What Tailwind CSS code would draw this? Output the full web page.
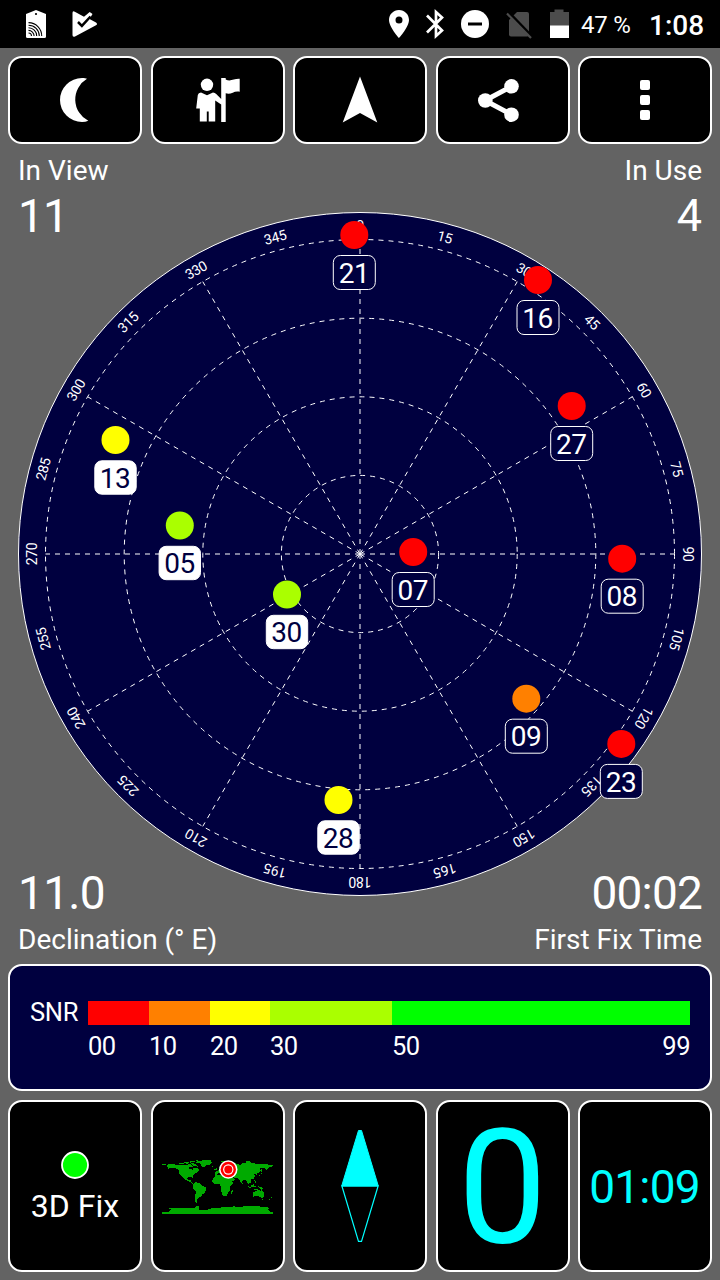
<!DOCTYPE html>
<html lang="en">
<head>
<meta charset="utf-8">
<title>GPS Satellites</title>
<script src="https://cdn.jsdelivr.net/npm/@tailwindcss/browser@4"></script>
</head>
<body class="w-[720px] h-[1280px] overflow-hidden bg-[#636363] text-white font-[Roboto,sans-serif] flex flex-col">

<!-- Status bar -->
<header class="h-12 shrink-0 bg-black flex items-center justify-between pl-[26px] pr-4">
  <div class="flex items-center gap-[26px]">
    <svg class="w-5 h-7" viewBox="26 10 20 28"><path d="M26 14L36 10l10 4V36.500Q46 38 44.500 38H27.500Q26 38 26 36.500Z" fill="#fff"/><circle cx="36" cy="14" r="1.100"/><path d="M28.500 33a3 3 0 0 1 3 3M28.500 30.400a5.600 5.600 0 0 1 5.600 5.600M28.500 27.800a8.200 8.200 0 0 1 8.200 8.200M28.500 25.200a10.800 10.800 0 0 1 10.800 10.800M28.500 22.600a13.200 13.200 0 0 1 13.200 13.400" fill="none" stroke="#000" stroke-width="1.100"/></svg>
    <svg class="w-[26px] h-[28px]" viewBox="72 10 26 28"><path d="M72.500 13Q72.500 10.500 74.800 11.800L84 16.800L89.700 12L92.500 14L89.500 19L96 22.500Q98 24 96 25.300L75 36.500Q72.500 37.500 72.500 35Z" fill="#fff"/><path d="M78 22L81.900 25.900L90.500 16.500" fill="none" stroke="#000" stroke-width="2.500"/></svg>
  </div>
  <div class="flex items-center">
    <svg class="w-[182px] h-8" viewBox="388 8 182 32">
      <path fill="#fff" fill-rule="evenodd" d="M399 10c-5.600 0-10 4.400-10 9.900C389 27 399 38 399 38s10-11 10-18.100c0-5.500-4.400-9.900-10-9.900zm0 6.400a3.500 3.500 0 1 1 0 7 3.500 3.500 0 0 1 0-7z"/>
      <path d="M427 15.500L442 30.500L436 36V12L442 17.500L427 32.500" fill="none" stroke="#fff" stroke-width="2.700"/>
      <circle cx="475" cy="24" r="14" fill="#fff"/><path d="M468 24h14" stroke="#000" stroke-width="3"/>
      <path d="M517 12H527Q529 12 529 14V34.500Q529 36.500 527 36.500H511Q509 36.500 509 34.500V20Z" fill="#4c4c4c"/><path d="M508.500 12L533 37.500" stroke="#000" stroke-width="2.600"/><path d="M507 13.500L531 38" stroke="#4c4c4c" stroke-width="2.200"/>
      <path d="M550 12h4.500V9.500h9V12h5.500V26H550Z" fill="#4c4c4c"/><path d="M550 25.500h19V38h-19z" fill="#fff"/>
    </svg>
    <span class="ml-[11px] w-[50px] text-[24px] leading-none whitespace-nowrap pt-[2px] tracking-[-0.2px]">47 %</span>
    <span class="ml-[18px] w-[55px] text-[28px] leading-none font-medium whitespace-nowrap pt-[3px]">1:08</span>
  </div>
</header>

<!-- Toolbar -->
<nav class="mt-2 mx-2 h-[88px] shrink-0 grid grid-cols-5 gap-[8.5px]">
  <button class="bg-black border-2 border-white rounded-[14px] flex items-center justify-center">
    <svg class="w-[130px] h-[84px]" viewBox="10 58 130 84"><path d="M87 78.800C84 78 82.500 78 82 78A22 22 0 0 0 82 122Q85.500 122 88.300 120.800A24 24 0 0 1 87 78.800Z" fill="#fff"/></svg>
  </button>
  <button class="bg-black border-2 border-white rounded-[14px] flex items-center justify-center">
    <svg class="w-[130px] h-[84px]" viewBox="153 58 130 84" fill="#fff"><circle cx="207" cy="84.800" r="6.200"/><path d="M221.200 78h4.500v1.500c5 2.500 8-1 14-.7v13c-6-1.500-8.500 3.500-14 1.500V122H221.200v-17.500l-6-4v21H208.700v-10h-1.900v10h-7V108.500h-3.600L197.800 95Q198.300 92.500 201 92.500l6 2.800 6-2.800q2 0 3.200 1.500l5 5z"/></svg>
  </button>
  <button class="bg-black border-2 border-white rounded-[14px] flex items-center justify-center">
    <svg class="w-[130px] h-[84px]" viewBox="295 58 130 84"><path d="M360 76.500L377.300 122.500L360 113L342.700 122.500Z" fill="#fff"/></svg>
  </button>
  <button class="bg-black border-2 border-white rounded-[14px] flex items-center justify-center">
    <svg class="w-[130px] h-[84px]" viewBox="438 58 130 84" fill="#fff"><path d="M511.500 86.500L485 100.500L511.500 114.500" fill="none" stroke="#fff" stroke-width="5"/><circle cx="485.300" cy="100.500" r="7.300"/><circle cx="511.500" cy="86.300" r="7.300"/><circle cx="511.500" cy="114.700" r="7.300"/></svg>
  </button>
  <button class="bg-black border-2 border-white rounded-[14px] flex flex-col gap-[5px] items-center justify-center">
    <span class="size-[10px] rounded-[2px] bg-white"></span><span class="size-[10px] rounded-[2px] bg-white"></span><span class="size-[10px] rounded-[2px] bg-white"></span>
  </button>
</nav>

<!-- Sky view -->
<main class="relative h-[820px] shrink-0 flex flex-col justify-between px-[18px]">
  <svg class="absolute left-0 top-0 w-[720px] h-[820px]" viewBox="0 144 720 820" font-family="Roboto, sans-serif">
    <circle cx="360" cy="554" r="341.500" fill="#00003f" stroke="#fff"/>
    <g transform="translate(360 554)" fill="none" stroke="#fff" stroke-dasharray="5 5">
      <circle r="78.600"/><circle r="157.200"/><circle r="235.800"/><circle r="314.500"/>
      <path d="M0 0V-314.500M0 0V314.500M0 0H314.500M0 0H-314.500M0 0L157.250 -272.360M0 0L272.360 -157.250M0 0L272.360 157.250M0 0L157.250 272.360M0 0L-157.250 272.360M0 0L-272.360 157.250M0 0L-272.360 -157.250M0 0L-157.250 -272.360"/>
    </g>
    <g transform="translate(360 554)" fill="#fff" font-size="14" text-anchor="middle" letter-spacing="-.3">
      <text y="-323">0</text>
      <text y="-323" transform="rotate(15)">15</text>
      <text y="-323" transform="rotate(30)">30</text>
      <text y="-323" transform="rotate(45)">45</text>
      <text y="-323" transform="rotate(60)">60</text>
      <text y="-323" transform="rotate(75)">75</text>
      <text y="-323" transform="rotate(90)">90</text>
      <text y="-323" transform="rotate(105)">105</text>
      <text y="-323" transform="rotate(120)">120</text>
      <text y="-323" transform="rotate(135)">135</text>
      <text y="-323" transform="rotate(150)">150</text>
      <text y="-323" transform="rotate(165)">165</text>
      <text y="-323" transform="rotate(180)">180</text>
      <text y="-323" transform="rotate(195)">195</text>
      <text y="-323" transform="rotate(210)">210</text>
      <text y="-323" transform="rotate(225)">225</text>
      <text y="-323" transform="rotate(240)">240</text>
      <text y="-323" transform="rotate(255)">255</text>
      <text y="-323" transform="rotate(270)">270</text>
      <text y="-323" transform="rotate(285)">285</text>
      <text y="-323" transform="rotate(300)">300</text>
      <text y="-323" transform="rotate(315)">315</text>
      <text y="-323" transform="rotate(330)">330</text>
      <text y="-323" transform="rotate(345)">345</text>
    </g>
    <!-- Satellites in view -->
    <g font-size="28" text-anchor="middle" fill="#00003f" stroke="#fff" letter-spacing="-.5">
      <g transform="translate(354.300 235)"><circle r="14" fill="#f00" stroke="none"/><rect x="-21" y="20.500" width="42" height="34" rx="7"/><text x="-.4" y="47.700" fill="#fff" stroke="none">21</text></g>
      <g transform="translate(538 280)"><circle r="14" fill="#f00" stroke="none"/><rect x="-21" y="20.500" width="42" height="34" rx="7"/><text x="-.4" y="47.700" fill="#fff" stroke="none">16</text></g>
      <g transform="translate(571.700 406)"><circle r="14" fill="#f00" stroke="none"/><rect x="-21" y="20.500" width="42" height="34" rx="7"/><text x="-.4" y="48" fill="#fff" stroke="none">27</text></g>
      <g transform="translate(413.200 552)"><circle r="14" fill="#f00" stroke="none"/><rect x="-21" y="20.500" width="42" height="34" rx="7"/><text x="-.4" y="47.700" fill="#fff" stroke="none">07</text></g>
      <g transform="translate(622.200 558.700)"><circle r="14" fill="#f00" stroke="none"/><rect x="-21" y="20.500" width="42" height="34" rx="7"/><text x="-.4" y="47.300" fill="#fff" stroke="none">08</text></g>
      <g transform="translate(526.300 698.700)"><circle r="14" fill="#ff8000" stroke="none"/><rect x="-21" y="20.500" width="42" height="34" rx="7"/><text x="-.4" y="47.300" fill="#fff" stroke="none">09</text></g>
      <g transform="translate(621.300 743.900)"><circle r="14" fill="#f00" stroke="none"/><rect x="-21" y="20.500" width="42" height="34" rx="7"/><text x="-.4" y="48" fill="#fff" stroke="none">23</text></g>
      <g transform="translate(115.500 440)"><circle r="14" fill="#ff0" stroke="none"/><rect x="-20.700" y="20.800" width="41.400" height="33.400" rx="7" fill="#fff"/><text x="-.4" y="47.700" stroke="none">13</text></g>
      <g transform="translate(179.800 525.500)"><circle r="14" fill="#af0" stroke="none"/><rect x="-20.700" y="20.800" width="41.400" height="33.400" rx="7" fill="#fff"/><text x="-.4" y="47.500" stroke="none">05</text></g>
      <g transform="translate(287 594.500)"><circle r="14" fill="#af0" stroke="none"/><rect x="-20.700" y="20.800" width="41.400" height="33.400" rx="7" fill="#fff"/><text x="-.4" y="47.500" stroke="none">30</text></g>
      <g transform="translate(338.500 800)"><circle r="14" fill="#ff0" stroke="none"/><rect x="-20.700" y="20.800" width="41.400" height="33.400" rx="7" fill="#fff"/><text x="-.4" y="48" stroke="none">28</text></g>
    </g>
  </svg>
  <div class="flex justify-between pt-[10px]">
    <div><div class="text-[28px] leading-[33px]">In View</div><div class="text-[46px] leading-[54px] mt-[2px] tracking-[-0.8px]">11</div></div>
    <div class="text-right"><div class="text-[28px] leading-[33px]">In Use</div><div class="text-[45px] leading-[54px] mt-[2px]">4</div></div>
  </div>
  <div class="flex justify-between pb-[8px]">
    <div><div class="text-[46px] leading-[54px] tracking-[-0.7px]">11.0</div><div class="text-[28px] leading-[33px] mt-[3px]">Declination (° E)</div></div>
    <div class="text-right"><div class="text-[46px] leading-[54px] tracking-[-0.8px]">00:02</div><div class="text-[28px] leading-[33px] mt-[3px]">First Fix Time</div></div>
  </div>
</main>

<!-- Signal strength legend -->
<section class="mx-2 h-[127px] shrink-0 bg-[#00003f] border-2 border-white rounded-[14px] pl-5 pr-5 pt-[31px]">
  <div class="flex items-center h-[32px]">
    <span class="w-[58px] text-[25.5px] leading-[32px] pb-[2px] tracking-[-0.3px]">SNR</span>
    <div class="flex h-6 w-[602px]">
      <div class="w-[61px] bg-[#ff0000]"></div><div class="w-[61px] bg-[#ff8000]"></div><div class="w-[60px] bg-[#ffff00]"></div><div class="w-[122px] bg-[#aaff00]"></div><div class="flex-1 bg-[#00ff00]"></div>
    </div>
  </div>
  <div class="flex ml-[58px] mt-px text-[25.5px] leading-[32px] tracking-[-0.5px]">
    <span class="w-[61px]">00</span><span class="w-[61px]">10</span><span class="w-[60px]">20</span><span class="w-[122px]">30</span><span class="flex-1">50</span><span>99</span>
  </div>
</section>

<!-- Bottom tiles -->
<footer class="mx-2 mt-[8.500px] h-[172.500px] shrink-0 grid grid-cols-5 gap-[8.5px]">
  <div class="bg-black border-2 border-white rounded-[14px] flex flex-col items-center pt-[49px]">
    <svg class="size-7" viewBox="0 0 28 28"><circle cx="14" cy="14" r="13" fill="#0f0" stroke="#fff" stroke-width="1.800"/></svg>
    <div class="text-[32px] leading-[38px] mt-[8px]">3D Fix</div>
  </div>
  <div class="bg-black border-2 border-white rounded-[14px] flex justify-center pt-[58px]">
    <svg class="w-[112px] h-[56px] overflow-visible" viewBox="162 1159.500 112 56">
      <g transform="translate(217.500 1185.500) scale(.308)" fill="#0a0" shape-rendering="crispEdges">
        <path d="M-180 -71h12v4h-12zM-165 -68L-156 -71L-141 -70L-125 -69L-110 -68L-96 -68L-93 -72L-84 -69L-80 -63L-93 -60L-93 -57L-80 -52L-78 -60L-68 -60L-60 -54L-56 -51L-66 -49L-60 -46L-70 -43L-76 -36L-81 -31L-80 -25L-84 -30L-94 -29L-98 -25L-97 -20L-91 -19L-87 -21L-88 -16L-83 -14L-82 -9L-78 -8L-83 -8L-91 -14L-105 -20L-111 -26L-117 -33L-124 -40L-124 -48L-132 -56L-143 -60L-152 -58L-162 -55L-157 -59L-164 -62Z"/>
        <path d="M-124 -76L-110 -73L-114 -70L-124 -72ZM-103 -77L-95 -73L-101 -71ZM-90 -77L-78 -74L-66 -68L-64 -63L-74 -64L-86 -71ZM-110 -78L-95 -79L-94 -76L-108 -76ZM-92 -82L-63 -83L-76 -78L-88 -77ZM-70 -79L-50 -83L-22 -83L-18 -76L-25 -70L-38 -66L-44 -60L-53 -66L-56 -75L-68 -76ZM-23 -66L-14 -66L-15 -63L-22 -64ZM-85 -23L-75 -20L-70 -18L-78 -20ZM-83 -82h5v4h-5z"/>
        <path d="M-77 -8L-71 -12L-61 -10L-51 -4L-48 0L-35 6L-39 15L-41 22L-48 26L-53 33L-57 36L-62 40L-66 45L-68 52L-66 55L-74 51L-74 42L-72 30L-70 18L-77 12L-81 5L-79 -2Z"/>
        <path d="M-17 -15L-16 -21L-9 -31L-6 -36L10 -37L11 -33L20 -31L34 -31L38 -20L43 -12L51 -12L48 -5L40 3L40 14L35 20L33 27L27 34L18 34L14 23L12 15L13 7L9 0L8 -5L-7 -5L-13 -9ZM44 16L50 14L48 24L44 26Z"/>
        <path d="M-9 -37L-9 -44L-1 -44L-4 -48L5 -52L9 -55L11 -56L15 -54L22 -56L22 -60L28 -60L23 -66L17 -62L15 -56L10 -59L5 -60L12 -66L20 -71L30 -71L41 -67L35 -64L45 -67L58 -69L70 -73L72 -68L80 -73L90 -76L104 -78L114 -74L130 -72L140 -73L160 -70L180 -69L180 -65L172 -61L163 -59L162 -55L157 -51L155 -59L142 -59L136 -54L141 -52L137 -45L129 -42L129 -36L125 -35L122 -40L118 -38L122 -31L117 -23L109 -21L109 -13L105 -9L100 -14L103 -2L98 -10L94 -16L90 -22L80 -15L77 -8L73 -18L68 -24L58 -26L50 -29L57 -22L53 -17L43 -13L35 -28L36 -36L27 -37L23 -38L14 -45L18 -40L15 -38L8 -44L-3 -37Z"/>
        <path d="M-6 -50L1 -51L-2 -57L-6 -58ZM-10 -52h4v-3h-4zM51 -71L68 -77L56 -70ZM12 -80L25 -80L16 -77ZM93 -81h14v3h-14zM130 -32L141 -37L142 -44L145 -43L140 -35ZM142 -54h3v8h-3zM95 -5L106 4L116 8L104 7ZM109 -2L118 -6L117 3L110 3ZM119 -1L125 -1L122 5L119 4ZM120 -18L125 -13L126 -6L121 -13ZM131 1L150 6L148 10L138 8ZM80 -9h3v4h-3zM120 9h10v3h-10z"/>
        <path d="M114 22L122 18L129 14L136 12L140 17L143 11L153 26L150 37L144 39L137 35L130 32L116 35ZM145 41h4v3h-4zM173 35L178 38L168 47L167 44L174 40Z"/>
        <path d="M-180 83L-158 83L-150 77L-158 73L-120 73L-100 71L-75 72L-68 66L-59 63L-62 71L-60 77L-35 78L-15 71L10 70L35 68L55 66L70 69L90 65L130 66L155 68L170 71L163 77L170 83H180V90H-180Z"/>
      </g>
      <circle cx="228.300" cy="1169" r="9.200" fill="#fff"/><circle cx="228.300" cy="1169" r="7.700" fill="#f00"/><circle cx="228.300" cy="1169" r="5.200" fill="#fff"/><circle cx="228.300" cy="1169" r="4" fill="#f00"/>
    </svg>
  </div>
  <div class="bg-black border-2 border-white rounded-[14px] flex justify-center pt-[27.500px]">
    <svg class="w-10 h-[114px]" viewBox="340 1129 40 114" fill="none" stroke="#0ff"><path d="M358.500 1130.500h3L378.300 1186H341.700Z" fill="#0ff"/><path d="M341.900 1186H378.100L361.500 1241.300h-3Z" stroke-width="1.200"/></svg>
  </div>
  <div class="bg-black border-2 border-white rounded-[14px] flex items-center justify-center text-[#00ffff] text-[159px] leading-none pt-[4px]">0</div>
  <div class="bg-black border-2 border-white rounded-[14px] flex items-center justify-center text-[#00ffff] text-[46px] leading-none tracking-[-0.8px] pt-[3px] pr-px">01:09</div>
</footer>
</body>
</html>
